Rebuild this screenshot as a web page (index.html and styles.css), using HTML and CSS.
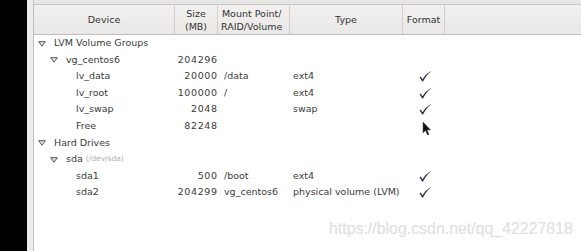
FILE: index.html
```html
<!DOCTYPE html>
<html>
<head>
<meta charset="utf-8">
<link rel="stylesheet" href="styles.css">
</head>
<body>
<div class="screen">
  <div class="black"></div>
  <div class="frame-left"></div>
  <div class="main">
    <div class="top-strip"></div>
    <div class="header">
      <div class="hc c-dev">Device</div>
      <div class="hc c-size">Size<br>(MB)</div>
      <div class="hc c-mount">Mount Point/<br>RAID/Volume</div>
      <div class="hc c-type">Type</div>
      <div class="hc c-fmt">Format</div>
      <div class="hc c-rest"></div>
    </div>
    <div class="rows">
      <div class="row">
        <div class="dev l0"><svg class="tri" width="8" height="6" viewBox="0 0 8 6"><path d="M0.7 0.7 H7.3 L4 5.3 Z" fill="#e4e4e4" stroke="#555" stroke-width="1"/></svg>LVM Volume Groups</div>
        <div class="size"></div><div class="mount"></div><div class="type"></div><div class="fmt"></div>
      </div>
      <div class="row">
        <div class="dev l1"><svg class="tri" width="8" height="6" viewBox="0 0 8 6"><path d="M0.7 0.7 H7.3 L4 5.3 Z" fill="#e4e4e4" stroke="#555" stroke-width="1"/></svg>vg_centos6</div>
        <div class="size">204296</div><div class="mount"></div><div class="type"></div><div class="fmt"></div>
      </div>
      <div class="row">
        <div class="dev l2">lv_data</div>
        <div class="size">20000</div><div class="mount">/data</div><div class="type">ext4</div><div class="fmt"><svg class="chk" width="12" height="11" viewBox="0 0 12 11"><path d="M0.5 6.2 L1.6 5.6 L3.6 8.3 Q6.5 3 11.6 0.3 L11.8 0.7 Q7.2 4 4.1 10.6 L3.2 10.6 Z" fill="#2e3550"/></svg></div>
      </div>
      <div class="row">
        <div class="dev l2">lv_root</div>
        <div class="size">100000</div><div class="mount">/</div><div class="type">ext4</div><div class="fmt"><svg class="chk" width="12" height="11" viewBox="0 0 12 11"><path d="M0.5 6.2 L1.6 5.6 L3.6 8.3 Q6.5 3 11.6 0.3 L11.8 0.7 Q7.2 4 4.1 10.6 L3.2 10.6 Z" fill="#2e3550"/></svg></div>
      </div>
      <div class="row">
        <div class="dev l2">lv_swap</div>
        <div class="size">2048</div><div class="mount"></div><div class="type">swap</div><div class="fmt"><svg class="chk" width="12" height="11" viewBox="0 0 12 11"><path d="M0.5 6.2 L1.6 5.6 L3.6 8.3 Q6.5 3 11.6 0.3 L11.8 0.7 Q7.2 4 4.1 10.6 L3.2 10.6 Z" fill="#2e3550"/></svg></div>
      </div>
      <div class="row">
        <div class="dev l2">Free</div>
        <div class="size">82248</div><div class="mount"></div><div class="type"></div><div class="fmt"></div>
      </div>
      <div class="row">
        <div class="dev l0"><svg class="tri" width="8" height="6" viewBox="0 0 8 6"><path d="M0.7 0.7 H7.3 L4 5.3 Z" fill="#e4e4e4" stroke="#555" stroke-width="1"/></svg>Hard Drives</div>
        <div class="size"></div><div class="mount"></div><div class="type"></div><div class="fmt"></div>
      </div>
      <div class="row">
        <div class="dev l1"><svg class="tri" width="8" height="6" viewBox="0 0 8 6"><path d="M0.7 0.7 H7.3 L4 5.3 Z" fill="#e4e4e4" stroke="#555" stroke-width="1"/></svg>sda <span class="sub">(/dev/sda)</span></div>
        <div class="size"></div><div class="mount"></div><div class="type"></div><div class="fmt"></div>
      </div>
      <div class="row">
        <div class="dev l2">sda1</div>
        <div class="size">500</div><div class="mount">/boot</div><div class="type">ext4</div><div class="fmt"><svg class="chk" width="12" height="11" viewBox="0 0 12 11"><path d="M0.5 6.2 L1.6 5.6 L3.6 8.3 Q6.5 3 11.6 0.3 L11.8 0.7 Q7.2 4 4.1 10.6 L3.2 10.6 Z" fill="#2e3550"/></svg></div>
      </div>
      <div class="row">
        <div class="dev l2">sda2</div>
        <div class="size">204299</div><div class="mount">vg_centos6</div><div class="type">physical volume (LVM)</div><div class="fmt"><svg class="chk" width="12" height="11" viewBox="0 0 12 11"><path d="M0.5 6.2 L1.6 5.6 L3.6 8.3 Q6.5 3 11.6 0.3 L11.8 0.7 Q7.2 4 4.1 10.6 L3.2 10.6 Z" fill="#2e3550"/></svg></div>
      </div>
    </div>
    <svg class="cursor" width="9" height="14" viewBox="0 0 9 14"><path d="M1 0 L1 11 L3.5 8.5 L5.5 13 L7 12.3 L5 8 L8.5 8 Z" fill="#111" stroke="#555" stroke-width="0.6"/></svg>
    <div class="watermark">https://blog.csdn.net/qq_42227818</div>
  </div>
</div>
</body>
</html>
```
FILE: styles.css
```css
html, body {
  margin: 0;
  padding: 0;
  width: 581px;
  height: 251px;
  overflow: hidden;
  background: #fff;
}
.screen {
  display: flex;
  width: 581px;
  height: 251px;
  font-family: "DejaVu Sans", sans-serif;
  font-size: 9.5px;
  color: #3a3a3a;
}
.black {
  width: 27px;
  background: #000;
  flex: none;
}
.frame-left {
  width: 6px;
  flex: none;
  background: #eeeceb;
  border-right: 1px solid #c2bfbc;
}
.main {
  flex: 1;
  position: relative;
  background: #fff;
  display: flex;
  flex-direction: column;
}
.top-strip {
  height: 4px;
  background: #e9e7e6;
  border-bottom: 1px solid #c8c5c2;
}
.header {
  display: grid;
  grid-template-columns: 141px 43px 72px 113px 42px 1fr;
  height: 29px;
  background: linear-gradient(#f2f1f0, #e9e8e7);
  border-bottom: 1px solid #bfbcb9;
}
.hc {
  display: flex;
  align-items: center;
  justify-content: center;
  text-align: center;
  line-height: 13px;
  border-right: 1px solid #d2cfcc;
  color: #333;
}
.c-mount { justify-content: flex-start; padding-left: 3px; }
.c-rest { border-right: none; }
.rows {
  display: flex;
  flex-direction: column;
}
.row {
  display: grid;
  grid-template-columns: 141px 43px 72px 113px 42px 1fr;
  height: 16.6px;
  line-height: 16.6px;
  white-space: nowrap;
}
.dev { display: flex; align-items: center; }
.l0 { padding-left: 4px; }
.l1 { padding-left: 16px; }
.l2 { padding-left: 42px; }
.tri {
  flex: none;
  margin-right: 8px;
  margin-top: 1px;
}
.sub {
  font-size: 7.5px;
  color: #b0b0b0;
  margin-left: 3px;
}
.size {
  text-align: right;
  padding-right: 1px;
  letter-spacing: 0.6px;
  margin-right: -0.6px;
}
.mount { padding-left: 6px; }
.type { padding-left: 3px; }
.fmt {
  display: flex;
  align-items: center;
  justify-content: center;
}
.chk { display: block; margin-left: 2px; }
.cursor {
  position: absolute;
  left: 388px;
  top: 122px;
}
.watermark {
  position: absolute;
  left: 295px;
  top: 220px;
  font-family: "Liberation Sans", Arial, sans-serif;
  font-size: 15.9px;
  color: #e0e0e0;
  text-shadow: 0 0 1px #f4f4f4;
  white-space: nowrap;
}
```
